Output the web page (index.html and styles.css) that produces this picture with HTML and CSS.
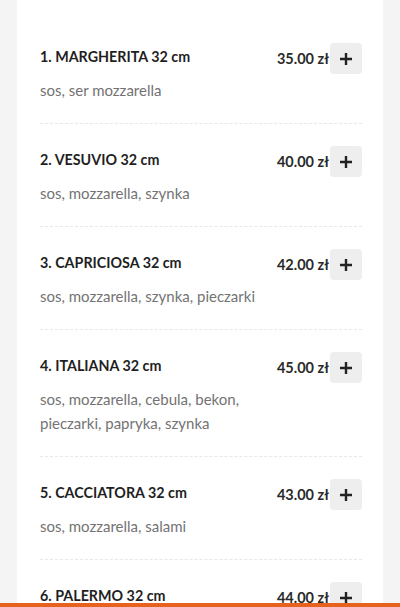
FILE: index.html
```html
<!DOCTYPE html>
<html lang="pl">
<head>
<meta charset="utf-8">
<title>Menu</title>
<link rel="stylesheet" href="styles.css">
</head>
<body>
<div class="page">
  <section class="card">
    <div class="item">
      <div class="head">
        <h3 class="name">1. MARGHERITA 32 cm</h3>
        <div class="buy"><span class="price">35.00 zł</span><button class="add" aria-label="Dodaj"><svg viewBox="0 0 14 14" width="14" height="14"><path d="M7 1v12M1 7h12" stroke="#222" stroke-width="2.4" fill="none"/></svg></button></div>
      </div>
      <p class="desc">sos, ser mozzarella</p>
    </div>
    <div class="item">
      <div class="head">
        <h3 class="name">2. VESUVIO 32 cm</h3>
        <div class="buy"><span class="price">40.00 zł</span><button class="add" aria-label="Dodaj"><svg viewBox="0 0 14 14" width="14" height="14"><path d="M7 1v12M1 7h12" stroke="#222" stroke-width="2.4" fill="none"/></svg></button></div>
      </div>
      <p class="desc">sos, mozzarella, szynka</p>
    </div>
    <div class="item">
      <div class="head">
        <h3 class="name">3. CAPRICIOSA 32 cm</h3>
        <div class="buy"><span class="price">42.00 zł</span><button class="add" aria-label="Dodaj"><svg viewBox="0 0 14 14" width="14" height="14"><path d="M7 1v12M1 7h12" stroke="#222" stroke-width="2.4" fill="none"/></svg></button></div>
      </div>
      <p class="desc">sos, mozzarella, szynka, pieczarki</p>
    </div>
    <div class="item">
      <div class="head">
        <h3 class="name">4. ITALIANA 32 cm</h3>
        <div class="buy"><span class="price">45.00 zł</span><button class="add" aria-label="Dodaj"><svg viewBox="0 0 14 14" width="14" height="14"><path d="M7 1v12M1 7h12" stroke="#222" stroke-width="2.4" fill="none"/></svg></button></div>
      </div>
      <p class="desc">sos, mozzarella, cebula, bekon,<br>pieczarki, papryka, szynka</p>
    </div>
    <div class="item">
      <div class="head">
        <h3 class="name">5. CACCIATORA 32 cm</h3>
        <div class="buy"><span class="price">43.00 zł</span><button class="add" aria-label="Dodaj"><svg viewBox="0 0 14 14" width="14" height="14"><path d="M7 1v12M1 7h12" stroke="#222" stroke-width="2.4" fill="none"/></svg></button></div>
      </div>
      <p class="desc">sos, mozzarella, salami</p>
    </div>
    <div class="item">
      <div class="head">
        <h3 class="name">6. PALERMO 32 cm</h3>
        <div class="buy"><span class="price">44.00 zł</span><button class="add" aria-label="Dodaj"><svg viewBox="0 0 14 14" width="14" height="14"><path d="M7 1v12M1 7h12" stroke="#222" stroke-width="2.4" fill="none"/></svg></button></div>
      </div>
      <p class="desc">sos, mozzarella, szynka, salami</p>
    </div>
  </section>
</div>
<div class="cartbar"></div>
</body>
</html>
```
FILE: styles.css
```css
html, body {
  margin: 0;
  padding: 0;
  background: #f4f4f4;
  font-family: Lato, "Open Sans", sans-serif;
  height: 607px;
  overflow: hidden;
}
.page {
  padding: 0 17px;
}
.card {
  background: #fff;
  padding: 21px 21px 0 23px;
}
.item {
  padding: 22px 0 21px;
  border-bottom: 1px dashed #e8e8e8;
}
.head {
  display: flex;
  justify-content: space-between;
  align-items: center;
  height: 31px;
}
.name {
  margin: 0;
  font-size: 14.3px;
  font-weight: 700;
  color: #1f1f1f;
  line-height: 20px;
  margin-top: -3px;
}
.buy {
  display: flex;
  align-items: center;
  gap: 1px;
}
.price {
  font-size: 14.5px;
  font-weight: 700;
  color: #2a2a2a;
}
.add {
  width: 32px;
  height: 31px;
  border: none;
  border-radius: 4px;
  background: #efeeee;
  display: flex;
  align-items: center;
  justify-content: center;
  padding: 0;
}
.desc {
  margin: 4px 0 0;
  font-size: 15px;
  line-height: 24px;
  color: #737373;
}
.cartbar {
  position: fixed;
  left: 0;
  right: 0;
  bottom: 0;
  height: 4px;
  background: #e8621f;
}
```
